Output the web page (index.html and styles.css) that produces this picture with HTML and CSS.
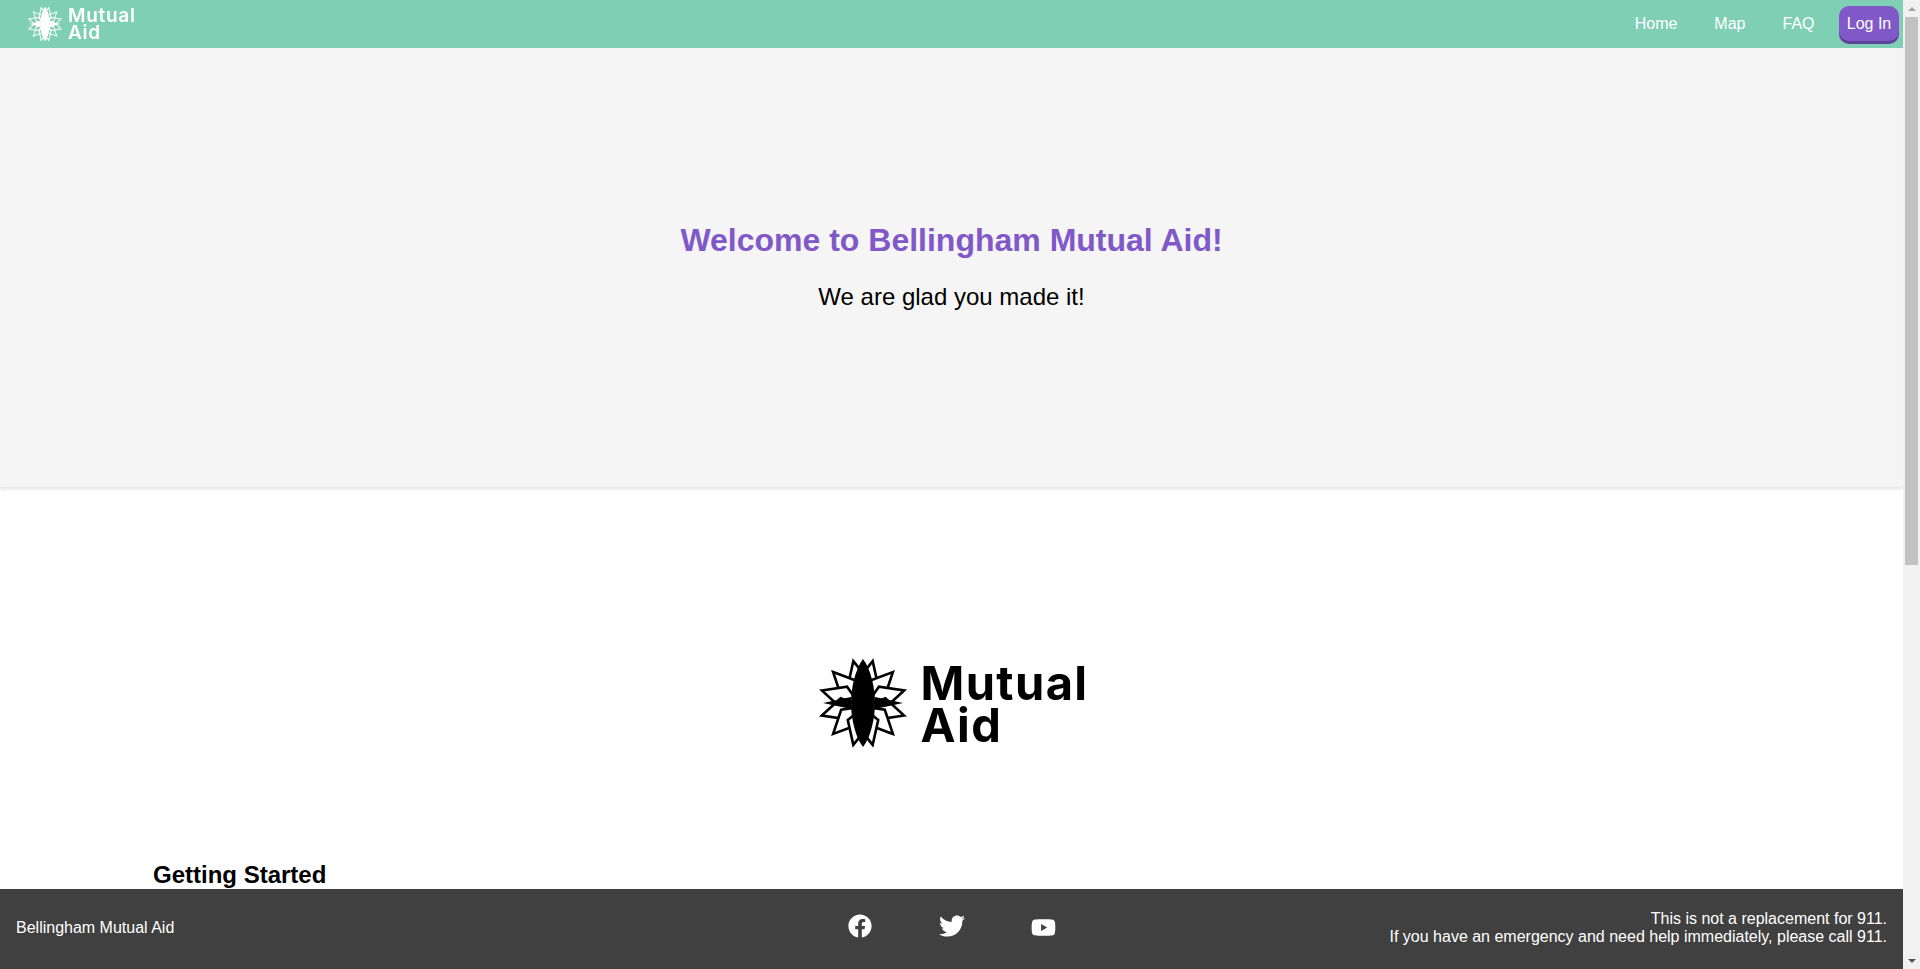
FILE: index.html
```html
<!DOCTYPE html>
<html lang="en">
<head>
<meta charset="utf-8">
<title>Bellingham Mutual Aid</title>
<link rel="stylesheet" href="styles.css">
</head>
<body>
<svg class="defs" width="0" height="0" aria-hidden="true">
  <symbol id="star" viewBox="-46 -46 92 92">
    <g class="petals">
      <polygon points="0,-43 11,-20 0,-6 -11,-20" transform="rotate(13)"/>
      <polygon points="0,-43 11,-20 0,-6 -11,-20" transform="rotate(-13)"/>
      <polygon points="0,-43 11,-20 0,-6 -11,-20" transform="rotate(44)"/>
      <polygon points="0,-43 11,-20 0,-6 -11,-20" transform="rotate(-44)"/>
      <polygon points="0,-43 11,-20 0,-6 -11,-20" transform="rotate(73)"/>
      <polygon points="0,-43 11,-20 0,-6 -11,-20" transform="rotate(-73)"/>
      <polygon points="0,-43 11,-20 0,-6 -11,-20" transform="rotate(107)"/>
      <polygon points="0,-43 11,-20 0,-6 -11,-20" transform="rotate(-107)"/>
      <polygon points="0,-43 11,-20 0,-6 -11,-20" transform="rotate(136)"/>
      <polygon points="0,-43 11,-20 0,-6 -11,-20" transform="rotate(-136)"/>
      <polygon points="0,-43 11,-20 0,-6 -11,-20" transform="rotate(167)"/>
      <polygon points="0,-43 11,-20 0,-6 -11,-20" transform="rotate(-167)"/>
    </g>
    <g class="solid">
      <polygon points="0,-40 6,-12 -6,-12" transform="rotate(90)"/>
      <polygon points="0,-40 6,-12 -6,-12" transform="rotate(-90)"/>
      <path d="M0-44C8-34 12-14 12 0S8 34 0 44C-8 34-12 14-12 0S-8-34 0-44Z"/>
    </g>
  </symbol>
</svg>

<div class="shell">
  <div class="column">
    <header class="nav">
      <a class="brand" href="#">
        <svg class="brand-star"><use href="#star"/></svg>
        <span class="brand-text">Mutual<br>Aid</span>
      </a>
      <nav class="links">
        <a class="link" href="#">Home</a>
        <a class="link" href="#">Map</a>
        <a class="link" href="#">FAQ</a>
        <a class="login" href="#">Log In</a>
      </nav>
    </header>

    <main class="page">
      <section class="hero">
        <h1 class="hero-title">Welcome to Bellingham Mutual Aid!</h1>
        <p class="hero-sub">We are glad you made it!</p>
      </section>
      <section class="logo-row">
        <div class="logo">
          <svg class="logo-star"><use href="#star"/></svg>
          <span class="logo-text">Mutual<br>Aid</span>
        </div>
      </section>
      <section class="content">
        <h2 class="content-title">Getting Started</h2>
      </section>
    </main>

    <footer class="footer">
      <div class="footer-name">Bellingham Mutual Aid</div>
      <div class="social">
        <a class="social-link" href="#" aria-label="Facebook">
          <svg class="fb" viewBox="0 0 512 512"><path d="M504 256C504 119 393 8 256 8S8 119 8 256c0 123.78 90.69 226.38 209.25 245V327.69h-63V256h63v-54.64c0-62.15 37-96.48 93.67-96.48 27.14 0 55.52 4.84 55.52 4.84v61h-31.28c-30.8 0-40.41 19.12-40.41 38.73V256h68.78l-11 71.69h-57.78V501C413.31 482.38 504 379.78 504 256z"/></svg>
        </a>
        <a class="social-link" href="#" aria-label="Twitter">
          <svg class="tw" viewBox="0 0 512 512"><path d="M459.37 151.716c.325 4.548.325 9.097.325 13.645 0 138.72-105.583 298.558-298.558 298.558-59.452 0-114.68-17.219-161.137-47.106 8.447.974 16.568 1.299 25.34 1.299 49.055 0 94.213-16.568 130.274-44.832-46.132-.975-84.792-31.188-98.112-72.772 6.498.974 12.995 1.624 19.818 1.624 9.421 0 18.843-1.3 27.614-3.573-48.081-9.747-84.143-51.98-84.143-102.985v-1.299c13.969 7.797 30.214 12.67 47.431 13.319-28.264-18.843-46.781-51.005-46.781-87.391 0-19.492 5.197-37.36 14.294-52.954 51.655 63.675 129.3 105.258 216.365 109.807-1.624-7.797-2.599-15.918-2.599-24.04 0-57.828 46.782-104.934 104.934-104.934 30.213 0 57.502 12.67 76.67 33.137 23.715-4.548 46.456-13.32 66.599-25.34-7.798 24.366-24.366 44.833-46.132 57.827 21.117-2.273 41.584-8.122 60.426-16.243-14.292 20.791-32.161 39.308-52.628 54.253z"/></svg>
        </a>
        <a class="social-link" href="#" aria-label="YouTube">
          <svg class="yt" viewBox="0 0 576 512"><path d="M549.655 124.083c-6.281-23.65-24.787-42.276-48.284-48.597C458.781 64 288 64 288 64S117.22 64 74.629 75.486c-23.497 6.322-42.003 24.947-48.284 48.597-11.412 42.867-11.412 132.305-11.412 132.305s0 89.438 11.412 132.305c6.281 23.65 24.787 41.5 48.284 47.821C117.22 448 288 448 288 448s170.78 0 213.371-11.486c23.497-6.321 42.003-24.171 48.284-47.821 11.412-42.867 11.412-132.305 11.412-132.305s0-89.438-11.412-132.305zm-317.51 213.508V175.185l142.739 81.205-142.739 81.201z"/></svg>
        </a>
      </div>
      <div class="footer-note">This is not a replacement for 911.<br>If you have an emergency and need help immediately, please call 911.</div>
    </footer>
  </div>

  <div class="scrollbar" aria-hidden="true">
    <div class="scroll-btn"><svg class="arrow" viewBox="0 0 8 4"><path class="arrow-up" d="M4 0L8 4H0Z"/></svg></div>
    <div class="scroll-track"><div class="scroll-thumb"></div></div>
    <div class="scroll-btn"><svg class="arrow" viewBox="0 0 8 4"><path class="arrow-down" d="M0 0H8L4 4Z"/></svg></div>
  </div>
</div>
</body>
</html>
```
FILE: styles.css
```css
* { box-sizing: border-box; }

html, body { height: 100%; }

body {
  margin: 0;
  overflow: hidden;
  font-family: "Liberation Sans", Arial, sans-serif;
  color: #000;
  background: #fff;
}

a { color: inherit; text-decoration: none; }

.defs { position: absolute; }

.shell { display: flex; height: 100vh; }
.column { flex: 1; min-width: 0; display: flex; flex-direction: column; }

/* scrollbar */
.scrollbar {
  flex: none;
  width: 17px;
  display: flex;
  flex-direction: column;
  background: #f1f1f1;
}
.scroll-btn { flex: none; height: 17px; display: flex; align-items: center; justify-content: center; }
.arrow { width: 8px; height: 4px; display: block; }
.arrow-up { fill: #a3a3a3; }
.arrow-down { fill: #505050; }
.scroll-track { flex: 1; padding: 0 2px; }
.scroll-thumb { height: 548px; background: #c1c1c1; }

/* star */
.petals polygon {
  fill: var(--petal-fill);
  stroke: var(--petal-line);
  stroke-width: 2.6;
  stroke-linejoin: miter;
}
.solid { fill: var(--petal-line); }

/* nav */
.nav {
  flex: none;
  height: 48px;
  display: flex;
  align-items: center;
  justify-content: space-between;
  padding: 0 4px 0 27px;
  background: #7fcfb4;
  color: #fff;
}
.brand { display: flex; align-items: center; gap: 5px; }
.brand-star {
  width: 36px;
  height: 36px;
  --petal-fill: transparent;
  --petal-line: #fff;
  filter: blur(.4px);
}
.brand-text {
  font-family: Inter, sans-serif;
  font-weight: 600;
  font-size: 19px;
  line-height: 17px;
  letter-spacing: .7px;
  filter: blur(.3px);
}
.links { display: flex; align-items: center; font-size: 16px; }
.link { padding: 0 18.5px; line-height: 18px; }
.login {
  width: 60px;
  height: 35px;
  margin-left: 6px;
  margin-bottom: 1px;
  display: flex;
  align-items: center;
  justify-content: center;
  background: #8058c8;
  border-radius: 10px;
  box-shadow: 0 3px 0 #5f4199;
}

/* main */
.page { flex: 1; min-height: 0; overflow: hidden; }

/* hero */
.hero {
  height: 439px;
  padding-bottom: 2px;
  display: flex;
  flex-direction: column;
  align-items: center;
  justify-content: center;
  background: #f5f5f5;
  box-shadow: 0 2px 4px rgba(0, 0, 0, .12);
}
.hero-title {
  margin: 0 0 24px;
  font-size: 32px;
  line-height: 37px;
  font-weight: 700;
  color: #8058c8;
}
.hero-sub {
  margin: 0;
  font-size: 24px;
  line-height: 28px;
}

/* logo */
.logo-row {
  display: flex;
  justify-content: center;
  padding: 170px 0 112px;
}
.logo { display: flex; align-items: center; gap: 12px; margin-left: 2px; }
.logo-star {
  width: 92px;
  height: 92px;
  --petal-fill: #fff;
  --petal-line: #000;
  filter: blur(.4px);
}
.logo-text {
  margin-top: 2px;
  font-family: Inter, sans-serif;
  font-weight: 700;
  font-size: 47px;
  line-height: 42px;
  letter-spacing: 1.4px;
  filter: blur(.4px);
}

/* content */
.content { padding: 0 153px; }
.content-title {
  margin: 0;
  font-size: 24px;
  line-height: 28px;
  font-weight: 700;
}

/* footer */
.footer {
  flex: none;
  height: 80px;
  display: grid;
  grid-template-columns: 1fr auto 1fr;
  align-items: center;
  padding: 0 16px 2px;
  background: #404040;
  color: #fff;
  font-size: 16px;
  line-height: 18px;
}
.social { display: flex; align-items: center; gap: 68px; margin-bottom: 4px; }
.social-link { width: 24px; height: 26px; display: flex; align-items: center; justify-content: center; }
.social-link svg { fill: #fff; display: block; flex: none; }
.fb { width: 24px; height: 24px; }
.tw { width: 26px; height: 26px; }
.yt { width: 25px; height: 25px; margin-top: 2px; }
.footer-note { text-align: right; }
```
